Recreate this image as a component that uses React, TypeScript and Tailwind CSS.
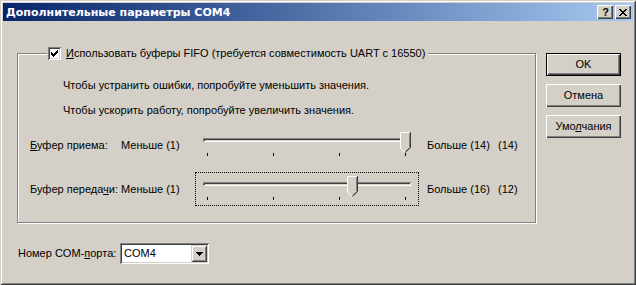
import React from "react";

const FONT = { fontFamily: '"Liberation Sans", Arial, sans-serif' };
const TITLE_FONT = { fontFamily: '"DejaVu Sans", Verdana, sans-serif' };

function Thumb({ left }: { left: number }) {
  return (
    <svg
      width="11"
      height="21"
      viewBox="0 0 11 21"
      className="absolute top-[3px]"
      style={{ left }}
      shapeRendering="crispEdges"
    >
      <polygon points="0,0 11,0 11,16 5.5,21 0,16" fill="#d4d0c8" />
      <polyline points="0.5,16 0.5,0.5 10,0.5" fill="none" stroke="#ffffff" strokeWidth="1" />
      <polyline points="0.5,16 5,20.5" fill="none" stroke="#ffffff" strokeWidth="1" shapeRendering="auto" />
      <polyline points="10.5,0 10.5,15.5" fill="none" stroke="#404040" strokeWidth="1" />
      <polyline points="10.5,15.5 5.5,20.5" fill="none" stroke="#404040" strokeWidth="1" shapeRendering="auto" />
      <polyline points="9.5,1 9.5,15" fill="none" stroke="#808080" strokeWidth="1" />
      <polyline points="9.5,15.5 5.5,19.5" fill="none" stroke="#808080" strokeWidth="1" shapeRendering="auto" />
    </svg>
  );
}

function Slider({ value, min, max, focused }: { value: number; min: number; max: number; focused?: boolean }) {
  const thumbLeft = Math.round(12 + ((value - min) / (max - min)) * 198 - 5);
  return (
    <div
      className={
        "relative w-[224px] h-[34px] shrink-0 " +
        (focused ? "border border-dotted border-black" : "border border-transparent")
      }
    >
      <div className="absolute left-[7px] top-[9px] w-[208px] h-[4px] shadow-[inset_1px_1px_0_#808080,inset_-1px_-1px_0_#ffffff,inset_2px_2px_0_#404040,inset_-2px_-2px_0_#d4d0c8]" />
      <div className="absolute left-[11px] top-[24px] w-[1px] h-[3px] bg-black" />
      <div className="absolute left-[77px] top-[24px] w-[1px] h-[3px] bg-black" />
      <div className="absolute left-[143px] top-[24px] w-[1px] h-[3px] bg-black" />
      <div className="absolute left-[209px] top-[24px] w-[1px] h-[3px] bg-black" />
      <Thumb left={thumbLeft - 1} />
    </div>
  );
}

function CheckBox() {
  const tops = [5, 6, 7, 6, 5, 4, 3];
  return (
    <div className="w-[13px] h-[13px] bg-white shrink-0 shadow-[inset_1px_1px_0_#808080,inset_-1px_-1px_0_#ffffff,inset_2px_2px_0_#404040,inset_-2px_-2px_0_#d4d0c8]">
      <svg width="13" height="13" viewBox="0 0 13 13" shapeRendering="crispEdges">
        {tops.map((t, i) => (
          <rect key={i} x={3 + i} y={t} width="1" height="3" fill="#000" />
        ))}
      </svg>
    </div>
  );
}

function Button({ children, isDefault }: { children: React.ReactNode; isDefault?: boolean }) {
  if (isDefault) {
    return (
      <div className="w-[75px] h-[23px] border border-black bg-[#d4d0c8]">
        <div className="w-full h-full flex items-center justify-center shadow-[inset_1px_1px_0_#ffffff,inset_-1px_-1px_0_#404040,inset_-2px_-2px_0_#808080]">
          {children}
        </div>
      </div>
    );
  }
  return (
    <div className="w-[75px] h-[23px] flex items-center justify-center bg-[#d4d0c8] shadow-[inset_1px_1px_0_#ffffff,inset_-1px_-1px_0_#404040,inset_-2px_-2px_0_#808080]">
      {children}
    </div>
  );
}

function CaptionButton({ children }: { children: React.ReactNode }) {
  return (
    <div className="w-[16px] h-[14px] bg-[#d4d0c8] flex items-center justify-center shadow-[inset_1px_1px_0_#ffffff,inset_-1px_-1px_0_#404040,inset_-2px_-2px_0_#808080]">
      {children}
    </div>
  );
}

export default function App() {
  const closeRows = [0, 1, 2, 3, 4, 5, 6];
  return (
    <div
      className="w-[636px] h-[285px] bg-[#d4d0c8] p-[3px] flex flex-col text-[11px] leading-[13px] text-black shadow-[inset_1px_1px_0_#d4d0c8,inset_-1px_-1px_0_#404040,inset_2px_2px_0_#ffffff,inset_-2px_-2px_0_#808080]"
      style={FONT}
    >
      {/* Caption */}
      <div className="h-[18px] shrink-0 flex items-center bg-linear-to-r from-[#0a246a] to-[#a6caf0] pl-[3px] pr-[2px]">
        <span className="text-white font-bold text-[11px] flex-1" style={TITLE_FONT}>
          Дополнительные параметры COM4
        </span>
        <div className="flex items-center gap-[2px]">
          <CaptionButton>
            <span className="font-bold text-[11px] leading-[11px] pl-[1px]">?</span>
          </CaptionButton>
          <CaptionButton>
            <svg width="8" height="7" viewBox="0 0 8 7" shapeRendering="crispEdges">
              {closeRows.map((r) => (
                <React.Fragment key={r}>
                  <rect x={r} y={r} width="2" height="1" fill="#000" />
                  <rect x={6 - r} y={r} width="2" height="1" fill="#000" />
                </React.Fragment>
              ))}
            </svg>
          </CaptionButton>
        </div>
      </div>

      {/* Body */}
      <div className="flex flex-1">
        {/* Left column */}
        <div className="flex flex-col pl-[14px]">
          {/* Group box */}
          <div className="mt-[32px] w-[519px] h-[170px] border border-[#808080] shadow-[1px_1px_0_#ffffff,inset_1px_1px_0_#ffffff] flex flex-col">
            <div className="-mt-[7px] ml-[29px] h-[13px] self-start flex items-center bg-[#d4d0c8] pl-[1px] pr-[3px]">
              <CheckBox />
              <span className="ml-[5px] whitespace-nowrap">
                <span className="underline">И</span>спользовать буферы FIFO (требуется совместимость UART с 16550)
              </span>
            </div>
            <div className="mt-[19px] pl-[45px] whitespace-nowrap">
              Чтобы устранить ошибки, попробуйте уменьшить значения.
            </div>
            <div className="mt-[12px] pl-[45px] whitespace-nowrap">
              Чтобы ускорить работу, попробуйте увеличить значения.
            </div>

            <div className="mt-[11px] h-[34px] flex items-center pl-[12px]">
              <span className="w-[91px] whitespace-nowrap">
                <span className="underline">Б</span>уфер приема:
              </span>
              <span className="w-[74px] whitespace-nowrap">Меньше (1)</span>
              <Slider value={14} min={1} max={14} />
              <span className="ml-[8px] w-[71px] whitespace-nowrap">Больше (14)</span>
              <span className="whitespace-nowrap">(14)</span>
            </div>

            <div className="mt-[10px] h-[34px] flex items-center pl-[12px]">
              <span className="w-[91px] whitespace-nowrap">
                Буфер переда<span className="underline">ч</span>и:
              </span>
              <span className="w-[74px] whitespace-nowrap">Меньше (1)</span>
              <Slider value={12} min={1} max={16} focused />
              <span className="ml-[8px] w-[71px] whitespace-nowrap">Больше (16)</span>
              <span className="whitespace-nowrap">(12)</span>
            </div>
          </div>

          {/* COM port row */}
          <div className="mt-[20px] ml-[1px] flex items-center">
            <span className="w-[102px] whitespace-nowrap">
              Номер COM-<span className="underline">п</span>орта:
            </span>
            <div className="w-[89px] h-[21px] bg-white flex items-center p-[2px] shadow-[inset_1px_1px_0_#808080,inset_-1px_-1px_0_#ffffff,inset_2px_2px_0_#404040,inset_-2px_-2px_0_#d4d0c8]">
              <span className="flex-1 pl-[2px]">COM4</span>
              <div className="w-[16px] h-[17px] bg-[#d4d0c8] flex items-center justify-center shadow-[inset_1px_1px_0_#d4d0c8,inset_-1px_-1px_0_#404040,inset_2px_2px_0_#ffffff,inset_-2px_-2px_0_#808080]">
                <svg width="7" height="4" viewBox="0 0 7 4" shapeRendering="crispEdges">
                  <rect x="0" y="0" width="7" height="1" fill="#000" />
                  <rect x="1" y="1" width="5" height="1" fill="#000" />
                  <rect x="2" y="2" width="3" height="1" fill="#000" />
                  <rect x="3" y="3" width="1" height="1" fill="#000" />
                </svg>
              </div>
            </div>
          </div>
        </div>

        {/* Right column buttons */}
        <div className="ml-[10px] mt-[32px] flex flex-col gap-[8px]">
          <Button isDefault>OK</Button>
          <Button>Отмена</Button>
          <Button>
            <span>
              Умо<span className="underline">л</span>чания
            </span>
          </Button>
        </div>
      </div>
    </div>
  );
}
